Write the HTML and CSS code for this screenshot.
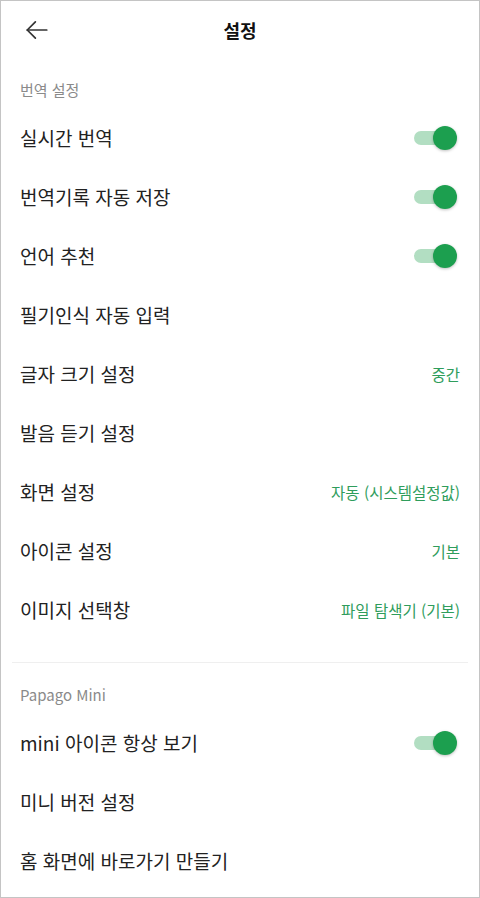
FILE: index.html
```html
<!DOCTYPE html>
<html lang="ko">
<head>
    <meta charset="UTF-8">
    <meta name="viewport" content="width=device-width, initial-scale=1.0">
    <title>설정</title>
    <link rel="stylesheet" href="styles.css">
</head>
<body>
    <div class="screen">
        <header class="topbar">
            <div class="back">
                <svg width="26" height="26" viewBox="0 0 24 24" fill="none" stroke="#333" stroke-width="1.6" stroke-linecap="round" stroke-linejoin="round">
                    <path d="M21 12H3"/>
                    <path d="M10.5 4.5L3 12l7.5 7.5"/>
                </svg>
            </div>
            <h1 class="title">설정</h1>
            <div></div>
        </header>

        <section class="group">
            <div class="group-title">번역 설정</div>
            <div class="row">
                <span class="label">실시간 번역</span>
                <span class="toggle"><span class="track"></span><span class="thumb"></span></span>
            </div>
            <div class="row">
                <span class="label">번역기록 자동 저장</span>
                <span class="toggle"><span class="track"></span><span class="thumb"></span></span>
            </div>
            <div class="row">
                <span class="label">언어 추천</span>
                <span class="toggle"><span class="track"></span><span class="thumb"></span></span>
            </div>
            <div class="row">
                <span class="label">필기인식 자동 입력</span>
            </div>
            <div class="row">
                <span class="label">글자 크기 설정</span>
                <span class="value">중간</span>
            </div>
            <div class="row">
                <span class="label">발음 듣기 설정</span>
            </div>
            <div class="row">
                <span class="label">화면 설정</span>
                <span class="value">자동 (시스템설정값)</span>
            </div>
            <div class="row">
                <span class="label">아이콘 설정</span>
                <span class="value">기본</span>
            </div>
            <div class="row">
                <span class="label">이미지 선택창</span>
                <span class="value">파일 탐색기 (기본)</span>
            </div>
        </section>

        <hr class="divider">

        <section class="group">
            <div class="group-title">Papago Mini</div>
            <div class="row">
                <span class="label">mini 아이콘 항상 보기</span>
                <span class="toggle"><span class="track"></span><span class="thumb"></span></span>
            </div>
            <div class="row">
                <span class="label">미니 버전 설정</span>
            </div>
            <div class="row">
                <span class="label">홈 화면에 바로가기 만들기</span>
            </div>
        </section>
    </div>
</body>
</html>
```

FILE: styles.css
```css
body {
    margin: 0;
    font-family: "Noto Sans CJK KR", "Noto Sans", sans-serif;
    background-color: #fff;
    color: #222;
}

.screen {
    height: 898px;
    box-sizing: border-box;
    border: 1px solid #c4c4c4;
    overflow: hidden;
}

.topbar {
    display: grid;
    grid-template-columns: 1fr auto 1fr;
    align-items: center;
    height: 57px;
}

.back {
    display: flex;
    padding-left: 23px;
    padding-top: 1px;
}

.title {
    margin: 0;
    font-size: 18px;
    font-weight: bold;
    color: #111;
}

.group-title {
    padding: 20px 19px 6px;
    line-height: 24px;
    font-size: 15px;
    color: #8a8a8a;
}

.row {
    display: flex;
    align-items: center;
    justify-content: space-between;
    height: 59px;
    padding: 0 19px;
}

.label {
    font-size: 19px;
    color: #222;
}

.value {
    font-size: 15.5px;
    color: #2f9d5c;
}

.toggle {
    position: relative;
    width: 43px;
    height: 24px;
    margin-right: 3px;
}

.toggle .track {
    position: absolute;
    left: 0;
    top: 5px;
    width: 38px;
    height: 14px;
    border-radius: 7px;
    background-color: #b2dec2;
}

.toggle .thumb {
    position: absolute;
    right: 0;
    top: 0;
    width: 24px;
    height: 24px;
    border-radius: 50%;
    background-color: #1c9f4f;
    box-shadow: 0 1px 3px rgba(0, 0, 0, 0.25);
}

.divider {
    margin: 23px 11px 0;
    border: none;
    border-top: 1px solid #efefef;
}
```
